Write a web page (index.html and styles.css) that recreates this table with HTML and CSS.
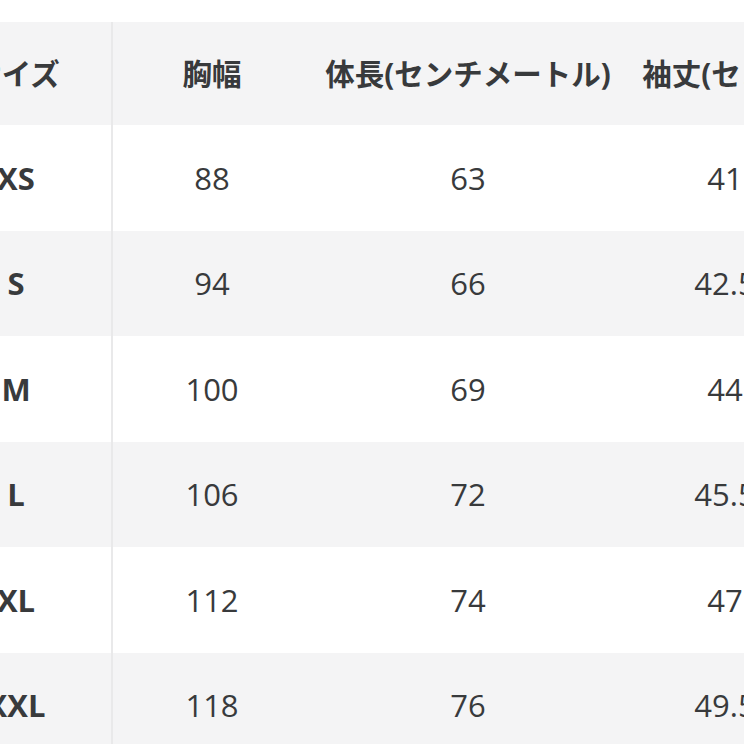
FILE: index.html
```html
<!DOCTYPE html>
<html lang="ja">
<head>
<meta charset="utf-8">
<title>サイズ表</title>
<link rel="stylesheet" href="styles.css">
</head>
<body>
<div class="size-table">
  <div class="row head">
    <div class="cell first">サイズ</div>
    <div class="cell">胸幅</div>
    <div class="cell">体長(センチメートル)</div>
    <div class="cell last">袖丈(センチメートル)</div>
  </div>
  <div class="row">
    <div class="cell first">XS</div>
    <div class="cell">88</div>
    <div class="cell">63</div>
    <div class="cell last">41</div>
  </div>
  <div class="row alt">
    <div class="cell first">S</div>
    <div class="cell">94</div>
    <div class="cell">66</div>
    <div class="cell last">42.5</div>
  </div>
  <div class="row">
    <div class="cell first">M</div>
    <div class="cell">100</div>
    <div class="cell">69</div>
    <div class="cell last">44</div>
  </div>
  <div class="row alt">
    <div class="cell first">L</div>
    <div class="cell">106</div>
    <div class="cell">72</div>
    <div class="cell last">45.5</div>
  </div>
  <div class="row">
    <div class="cell first">XL</div>
    <div class="cell">112</div>
    <div class="cell">74</div>
    <div class="cell last">47</div>
  </div>
  <div class="row alt">
    <div class="cell first">XXL</div>
    <div class="cell">118</div>
    <div class="cell">76</div>
    <div class="cell last">49.5</div>
  </div>
</div>
</body>
</html>
```

FILE: styles.css
```css
html, body {
  margin: 0;
  padding: 0;
  background: #ffffff;
  overflow: hidden;
}

body {
  font-family: "Open Sans", "Noto Sans CJK JP", sans-serif;
  color: #383a3c;
}

.size-table {
  margin-top: 22px;
  margin-left: -79px;
  width: 1024px;
}

.row {
  display: grid;
  grid-template-columns: 192px 198px 314px 320px;
  height: 105.5px;
  font-size: 31px;
}

.row.head {
  height: 103px;
  background: #f4f4f5;
  font-size: 29.5px;
  font-weight: 700;
}

.row.alt {
  background: #f4f4f5;
}

.cell {
  display: flex;
  align-items: center;
  justify-content: center;
  white-space: nowrap;
}

.row.head .cell {
  padding-bottom: 2px;
}

.cell.first {
  font-weight: 700;
  border-right: 2px solid #e9e9ea;
}

.row .cell.last {
  padding-right: 120px;
}

.row.head .cell.last {
  padding-right: 0;
}
```
